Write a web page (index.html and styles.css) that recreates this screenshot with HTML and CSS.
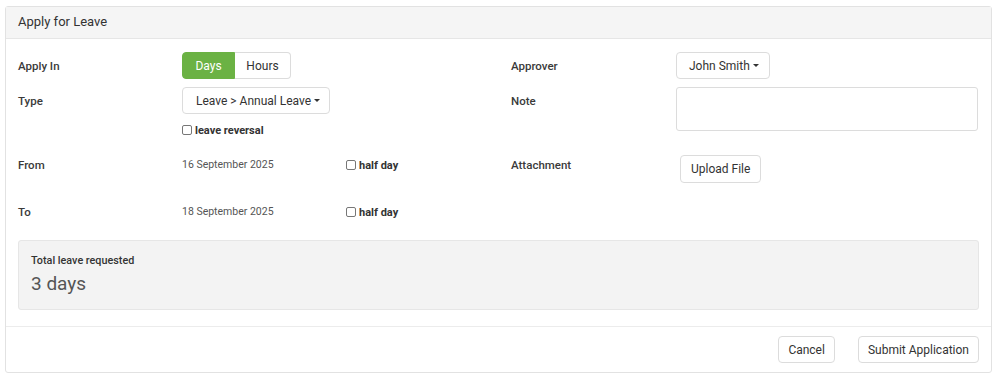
FILE: index.html
```html
<!DOCTYPE html>
<html>
<head>
<meta charset="utf-8">
<link rel="stylesheet" href="styles.css">
</head>
<body>
<div class="panel">
  <div class="panel-heading">Apply for Leave</div>
  <div class="panel-body">
    <div class="form-grid">
      <div class="label r1">Apply In</div>
      <div class="cell r1">
        <div class="btn-group">
          <span class="btn btn-active">Days</span><span class="btn btn-right">Hours</span>
        </div>
      </div>
      <div class="label r1">Approver</div>
      <div class="cell r1"><span class="btn">John Smith <span class="caret"></span></span></div>

      <div class="label r2">Type</div>
      <div class="cell r2 stack">
        <span class="btn">Leave &gt; Annual Leave <span class="caret"></span></span>
        <label class="check"><span class="box"></span>leave reversal</label>
      </div>
      <div class="label r2">Note</div>
      <div class="cell r2"><div class="textarea"></div></div>

      <div class="label r3">From</div>
      <div class="cell r3 date-row"><span class="date">16 September 2025</span><label class="check"><span class="box"></span>half day</label></div>
      <div class="label r3">Attachment</div>
      <div class="cell r3"><span class="btn upload">Upload File</span></div>

      <div class="label r4">To</div>
      <div class="cell r4 date-row"><span class="date">18 September 2025</span><label class="check"><span class="box"></span>half day</label></div>
      <div class="label r4"></div>
      <div class="cell r4"></div>
    </div>
    <div class="summary">
      <div class="summary-label">Total leave requested</div>
      <div class="summary-value">3 days</div>
    </div>
  </div>
  <div class="panel-footer">
    <span class="btn">Cancel</span>
    <span class="btn">Submit Application</span>
  </div>
</div>
</body>
</html>
```

FILE: styles.css
```css
* { box-sizing: border-box; }
body {
  margin: 0;
  padding: 6px 8px 0 5px;
  font-family: Roboto, "Liberation Sans", sans-serif;
  color: #333;
  background: #fff;
}
.panel {
  border: 1px solid #e2e2e2;
  border-radius: 3px;
  background: #fff;
}
.panel-heading {
  background: #f5f5f5;
  border-bottom: 1px solid #e6e6e6;
  padding: 7px 12px 8px;
  font-size: 13px;
  line-height: 16px;
  color: #333;
}
.panel-body {
  padding: 13px 12px 16px;
}
.form-grid {
  display: grid;
  grid-template-columns: 164px 329px 165px 1fr;
  grid-template-rows: 35px 64px 47px 30px;
}
.label {
  font-size: 11.5px;
  font-weight: 500;
  line-height: 16px;
  padding-top: 6px;
  color: #3a3a3a;
}
.r3.label { padding-top: 6px; }
.r4.label { padding-top: 6px; }
.cell { display: flex; align-items: flex-start; }
.stack { flex-direction: column; gap: 10px; }
.btn {
  display: inline-flex;
  align-items: center;
  height: 27px;
  padding: 0 9px;
  border: 1px solid #dcdcdc;
  border-radius: 4px;
  background: #fff;
  font-size: 12px;
  color: #333;
  white-space: nowrap;
}
.btn-group { display: inline-flex; }
.btn-group .btn-active {
  background: #6bb244;
  border-color: #6bb244;
  color: #fff;
  border-radius: 4px 0 0 4px;
  width: 53px;
  justify-content: center;
  padding: 0;
}
.btn-group .btn-right {
  border-left: none;
  border-radius: 0 4px 4px 0;
  width: 56px;
  justify-content: center;
  padding: 0;
}
.r1 .btn:not(.btn-active):not(.btn-right) { padding: 0 10px 0 12px; }
.r2 .btn { padding: 0 9px 0 13px; }
.caret {
  display: inline-block;
  width: 0;
  height: 0;
  margin-left: 3px;
  border-top: 3.5px solid #333;
  border-left: 3px solid transparent;
  border-right: 3px solid transparent;
}
.check {
  display: inline-flex;
  align-items: center;
  font-size: 11px;
  font-weight: 700;
  color: #333;
  line-height: 14px;
}
.box {
  width: 10px;
  height: 10px;
  border: 1px solid #777;
  border-radius: 2px;
  margin-right: 3px;
  margin-top: -3px;
  background: #fff;
}
.textarea {
  width: 302px;
  height: 44px;
  border: 1px solid #dcdcdc;
  border-radius: 3px;
}
.date-row { padding-top: 6px; }
.date {
  width: 164px;
  font-size: 10.5px;
  line-height: 16px;
  color: #555;
}
.date-row .check { margin-top: 2px; }
.upload { margin-top: 4px; margin-left: 4px; height: 28px; padding: 0 10px; }
.summary {
  margin-top: 12px;
  background: #f3f3f3;
  border: 1px solid #e6e6e6;
  border-radius: 3px;
  padding: 13px 12px 12px;
  height: 70px;
}
.summary-label {
  font-size: 10.8px;
  font-weight: 500;
  line-height: 14px;
  color: #333;
}
.summary-value {
  font-size: 19px;
  line-height: 24px;
  color: #555;
  margin-top: 4px;
}
.panel-footer {
  border-top: 1px solid #ececec;
  padding: 9px 12px 9px;
  display: flex;
  justify-content: flex-end;
  gap: 23px;
}
```
